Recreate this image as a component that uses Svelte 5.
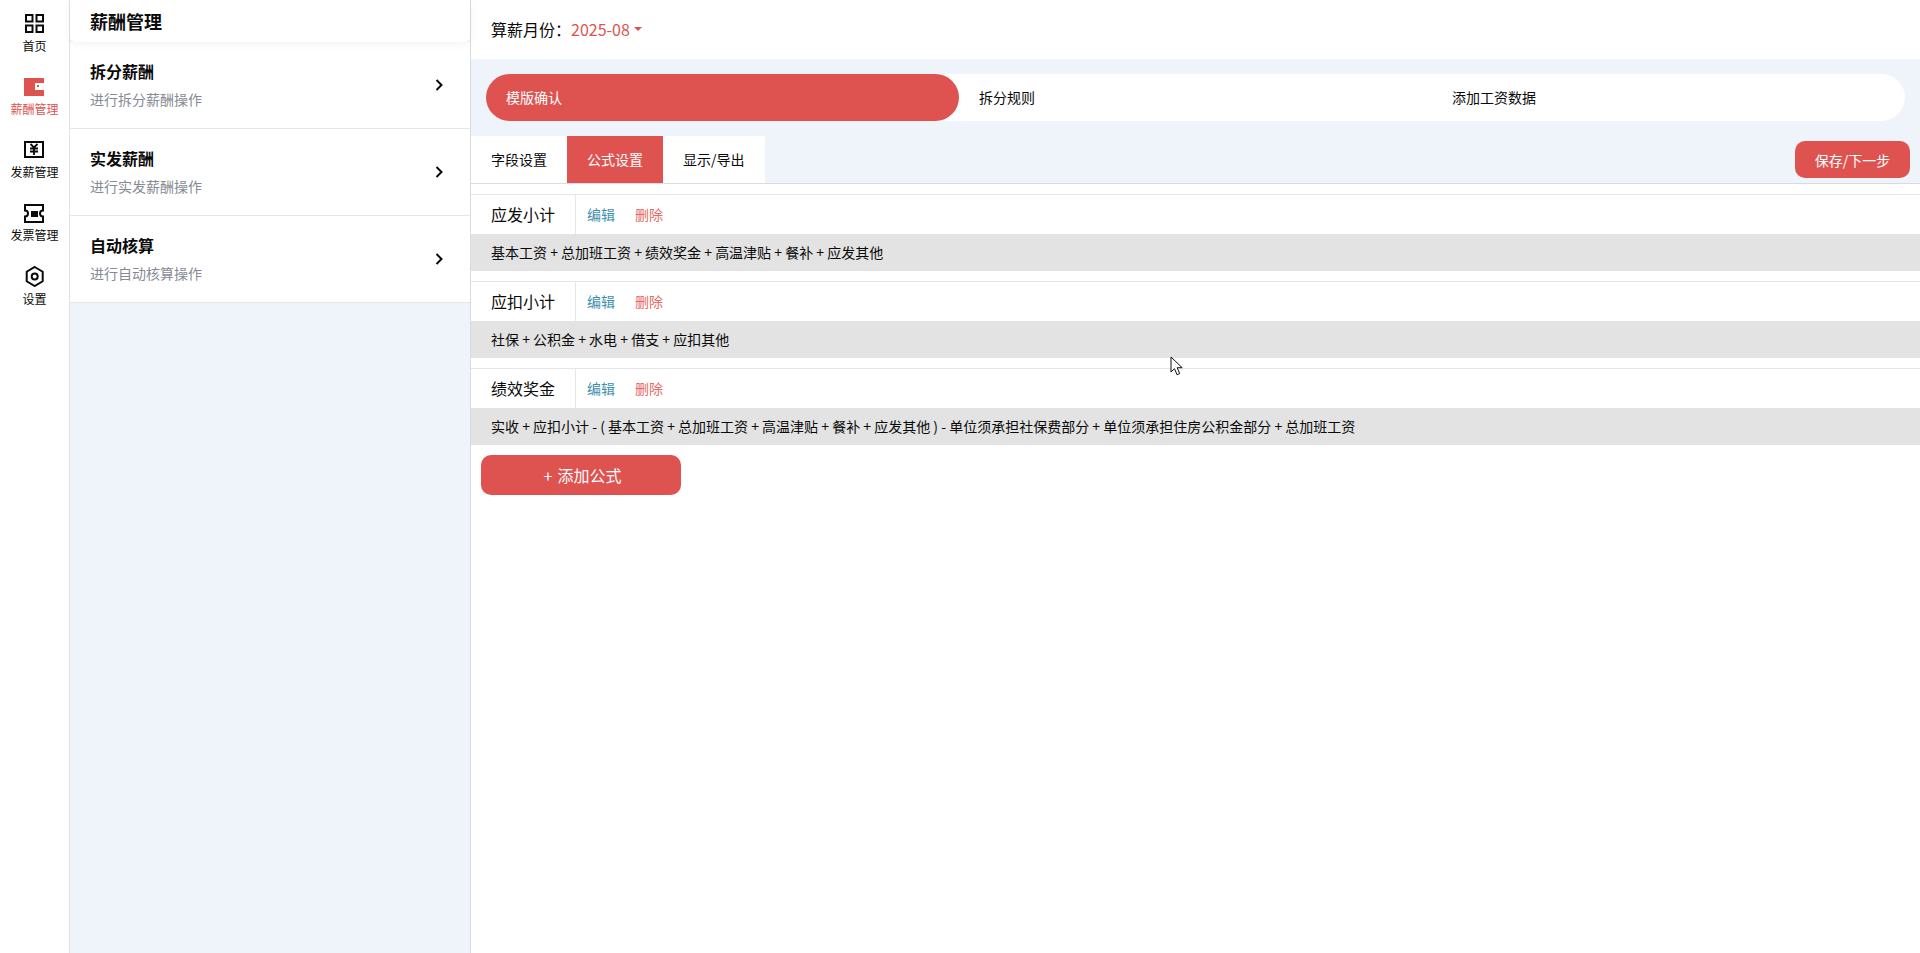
<script>
  const nav = [
    { label: '首页', icon: 'home' },
    { label: '薪酬管理', icon: 'wallet', active: true },
    { label: '发薪管理', icon: 'pay' },
    { label: '发票管理', icon: 'ticket' },
    { label: '设置', icon: 'gear' }
  ];
  const items = [
    { title: '拆分薪酬', sub: '进行拆分薪酬操作' },
    { title: '实发薪酬', sub: '进行实发薪酬操作' },
    { title: '自动核算', sub: '进行自动核算操作' }
  ];
  const steps = ['模版确认', '拆分规则', '添加工资数据'];
  const tabs = ['字段设置', '公式设置', '显示/导出'];
  const formulas = [
    { name: '应发小计', expr: '基本工资 + 总加班工资 + 绩效奖金 + 高温津贴 + 餐补 + 应发其他' },
    { name: '应扣小计', expr: '社保 + 公积金 + 水电 + 借支 + 应扣其他' },
    { name: '绩效奖金', expr: '实收 + 应扣小计 - ( 基本工资 + 总加班工资 + 高温津贴 + 餐补 + 应发其他 ) - 单位须承担社保费部分 + 单位须承担住房公积金部分 + 总加班工资' }
  ];
</script>

<div class="app">
  <nav class="rail">
    {#each nav as n}
      <div class="rail-item" class:active={n.active}>
        <svg class="rail-icon" viewBox="0 0 22 22" width="22" height="22">
          {#if n.icon === 'home'}
            <g fill="none" stroke="#0a0a0a" stroke-width="2">
              <rect x="2" y="2" width="6.500" height="6.500" /><rect x="12.500" y="2" width="6.500" height="6.500" />
              <rect x="2" y="12.500" width="6.500" height="6.500" /><rect x="12.500" y="12.500" width="6.500" height="6.500" />
            </g>
          {:else if n.icon === 'wallet'}
            <path fill="#de5350" fill-rule="evenodd" d="M0 2h20v5h-9v7h9v6H0zM13 9h2v2h-2z" />
          {:else if n.icon === 'pay'}
            <rect x="1" y="3" width="18" height="15" fill="none" stroke="#0a0a0a" stroke-width="2" />
            <path fill="none" stroke="#0a0a0a" stroke-width="1.800" d="M6.500 5l3.500 3.500L13.500 5M6 9.500h8M6 12.500h8M10 8.500V16" />
          {:else if n.icon === 'ticket'}
            <path fill="none" stroke="#0a0a0a" stroke-width="2" d="M1 3h18v5.500a3 3 0 0 0 0 6V20H1v-5.500a3 3 0 0 0 0-6z" />
            <rect x="7" y="9" width="7" height="6" fill="#0a0a0a" />
          {:else}
            <path fill="none" stroke="#0a0a0a" stroke-width="2" d="M10.700 2l8 4.700v9.600l-8 4.700-8-4.700V6.700z" />
            <circle cx="10.700" cy="11.500" r="3" fill="none" stroke="#0a0a0a" stroke-width="2" />
          {/if}
        </svg>
        <span>{n.label}</span>
      </div>
    {/each}
  </nav>

  <aside class="side">
    <div class="side-head">薪酬管理</div>
    {#each items as it}
      <div class="side-item">
        <div class="side-text">
          <div class="side-title">{it.title}</div>
          <div class="side-sub">{it.sub}</div>
        </div>
        <svg viewBox="0 0 10 14" width="10" height="14"><path d="M2.500 2l5 5-5 5" fill="none" stroke="#0a0a0a" stroke-width="2" /></svg>
      </div>
    {/each}
  </aside>

  <main class="main">
    <header class="top">
      <span>算薪月份：</span><span class="month">2025-08</span><i class="caret"></i>
    </header>
    <div class="steps-wrap">
      <div class="steps">
        {#each steps as s, i}
          <div class="step" class:on={i === 0}>{s}</div>
        {/each}
      </div>
    </div>
    <div class="tabbar">
      {#each tabs as t, i}
        <div class="tab" class:on={i === 1}>{t}</div>
      {/each}
      <button class="save">保存/下一步</button>
    </div>
    <div class="list">
      {#each formulas as f}
        <section class="formula">
          <div class="f-head">
            <div class="f-name">{f.name}</div>
            <div class="f-actions"><span class="edit">编辑</span><span class="del">删除</span></div>
          </div>
          <div class="f-expr">{f.expr}</div>
        </section>
      {/each}
      <button class="add">+ 添加公式</button>
    </div>
  </main>

  <svg class="cursor" viewBox="0 0 14 20" width="14" height="20">
    <path d="M1 1v15l3.500-3.300 2.500 6 2.700-1.100-2.500-5.900h5z" fill="#fff" stroke="#111" stroke-width="1" />
  </svg>
</div>

<style>
  :global(body) { margin: 0; background: #fff; }
  .app {
    position: relative;
    display: flex;
    height: 953px;
    overflow: hidden;
    font-family: "Noto Sans CJK SC", "Noto Sans", sans-serif;
    font-size: 14px;
    color: #0a0a0a;
  }
  .rail { width: 69px; border-right: 1px solid #e0e2e8; flex: none; padding-top: 13px; }
  .rail-item { height: 63px; display: flex; flex-direction: column; align-items: center; font-size: 12px; line-height: 18px; }
  .rail-item .rail-icon { margin-bottom: 2px; flex: none; }
  .rail-item:last-child .rail-icon { margin-bottom: 3px; }
  .rail-item.active { color: #de5350; }
  .side { width: 400px; flex: none; background: #eff3fa; border-right: 1px solid #d8dbe2; }
  .side-head {
    height: 42px; box-sizing: border-box; background: #fff; padding-left: 20px;
    font-size: 18px; font-weight: 700; line-height: 42px;
    box-shadow: 0 2px 10px rgba(0,0,0,.05); position: relative; border-radius: 0 0 5px 5px;
  }
  .side-item {
    height: 87px; box-sizing: border-box; background: #fff; border-bottom: 1px solid #e4e6ea;
    display: flex; align-items: center; justify-content: space-between; padding: 0 26px 0 20px;
  }
  .side-text { padding-bottom: 2px; }
  .side-title { font-size: 16px; font-weight: 700; line-height: 24px; }
  .side-sub { color: #868a94; line-height: 20px; margin-top: 6px; }
  .main { flex: 1; min-width: 0; display: flex; flex-direction: column; }
  .top { height: 59px; box-sizing: border-box; padding: 0 0 2px 20px; display: flex; align-items: center; font-size: 16px; flex: none; }
  .month { color: #de5350; }
  .caret { border: 4px solid transparent; border-top-color: #de5350; border-bottom-width: 0; margin-left: 4px; }
  .steps-wrap { background: #eff3fa; padding: 15px; flex: none; }
  .steps { display: grid; grid-template-columns: repeat(3, 1fr); background: #fff; border-radius: 24px; height: 47px; }
  .step { padding-left: 20px; line-height: 47px; border-radius: 24px; }
  .step.on { background: #de5350; color: #fff; }
  .tabbar { height: 47px; display: flex; background: #eff3fa; border-bottom: 1px solid #d8dbe2; flex: none; }
  .tab { background: #fff; padding: 0 20px; line-height: 47px; }
  .tab.on { background: #de5350; color: #fff; }
  .save {
    margin: 5px 10px 0 auto; width: 115px; height: 37px; border: 0; border-radius: 10px;
    background: #de5350; color: #fff; font: inherit;
  }
  .list { padding-top: 10px; }
  .formula { margin-bottom: 10px; }
  .f-head { height: 39px; border-top: 1px solid #e4e6ea; display: flex; }
  .f-name { width: 105px; box-sizing: border-box; padding-left: 20px; border-right: 1px solid #e4e6ea; font-size: 16px; line-height: 39px; }
  .f-actions { display: flex; gap: 20px; padding-left: 11px; line-height: 39px; }
  .edit { color: #3f8fb0; }
  .del { color: #e56a66; }
  .f-expr { height: 37px; background: #e3e3e3; padding-left: 20px; line-height: 37px; }
  .add {
    display: block; margin: 0 0 0 10px; width: 200px; height: 40px; border: 0; border-radius: 10px;
    background: #de5350; color: #fff; font: inherit; font-size: 16px;
    padding: 0 0 0 3px; word-spacing: 1.500px;
  }
  .cursor { position: absolute; left: 1170px; top: 356px; }
</style>
